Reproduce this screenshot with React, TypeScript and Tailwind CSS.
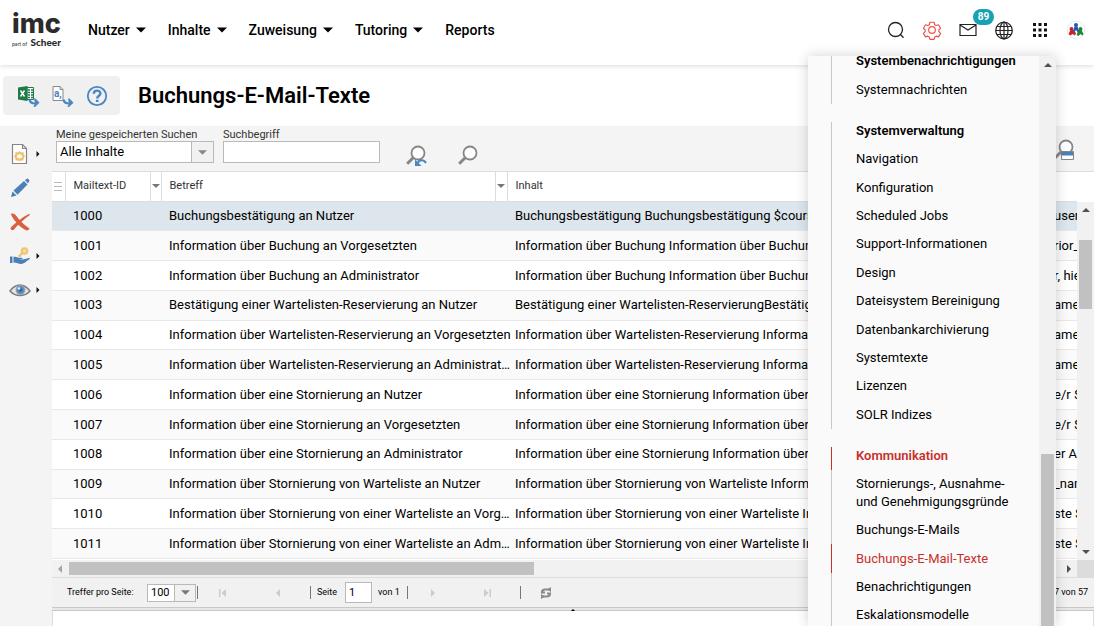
import React from "react";

type Row = { id: number; subject: string; body: string; tail: string };

const rows: Row[] = [
  { id: 1000, subject: "Buchungsbestätigung an Nutzer", body: "Buchungsbestätigung Buchungsbestätigung $course", tail: "user_" },
  { id: 1001, subject: "Information über Buchung an Vorgesetzten", body: "Information über Buchung Information über Buchung", tail: "rior_" },
  { id: 1002, subject: "Information über Buchung an Administrator", body: "Information über Buchung Information über Buchung", tail: "r, hie" },
  { id: 1003, subject: "Bestätigung einer Wartelisten-Reservierung an Nutzer", body: "Bestätigung einer Wartelisten-ReservierungBestätigung", tail: "ame" },
  { id: 1004, subject: "Information über Wartelisten-Reservierung an Vorgesetzten", body: "Information über Wartelisten-Reservierung Information", tail: "ame" },
  { id: 1005, subject: "Information über Wartelisten-Reservierung an Administrator", body: "Information über Wartelisten-Reservierung Information", tail: "ame" },
  { id: 1006, subject: "Information über eine Stornierung an Nutzer", body: "Information über eine Stornierung Information über eine", tail: "e/r $" },
  { id: 1007, subject: "Information über eine Stornierung an Vorgesetzten", body: "Information über eine Stornierung Information über eine", tail: "e/r $" },
  { id: 1008, subject: "Information über eine Stornierung an Administrator", body: "Information über eine Stornierung Information über eine", tail: "er A" },
  { id: 1009, subject: "Information über Stornierung von Warteliste an Nutzer", body: "Information über Stornierung von Warteliste Information", tail: "_nam" },
  { id: 1010, subject: "Information über Stornierung von einer Warteliste an Vorgesetzten", body: "Information über Stornierung von einer Warteliste Information", tail: "ste $" },
  { id: 1011, subject: "Information über Stornierung von einer Warteliste an Administrator", body: "Information über Stornierung von einer Warteliste Information", tail: "ste $" },
];

const adminItems = [
  "Navigation",
  "Konfiguration",
  "Scheduled Jobs",
  "Support-Informationen",
  "Design",
  "Dateisystem Bereinigung",
  "Datenbankarchivierung",
  "Systemtexte",
  "Lizenzen",
  "SOLR Indizes",
];

function Triangle({ dir, className }: { dir: "up" | "down" | "left" | "right"; className: string }) {
  const d = { down: "M0 2h8L4 6z", up: "M0 6h8L4 2z", left: "M6 0v8L2 4z", right: "M2 0v8l4-4z" }[dir];
  return (
    <svg viewBox="0 0 8 8" className={className} fill="currentColor" aria-hidden="true">
      <path d={d} />
    </svg>
  );
}

function Logo() {
  return (
    <a href="#start" aria-label="imc part of Scheer" className="flex w-[49px] shrink-0 flex-col text-[#2b2b2b]">
      <span className="font-[Inter,sans-serif] text-[27px] leading-[26px] font-extrabold">imc</span>
      <span className="flex items-baseline justify-between leading-[10px] whitespace-nowrap">
        <span className="font-[Lato,sans-serif] text-[5px] font-bold text-[#555]">part of</span>
        <span className="font-[Lato,sans-serif] text-[10px] font-black">Scheer</span>
      </span>
    </a>
  );
}

function ArrowBlue() {
  return (
    <>
      <path d="M11.500 14.500c.5 3 2.500 4 5.500 4" fill="none" stroke="#4a86c0" strokeWidth="2.200" />
      <path d="M16 13.500h1.500l4 4.300-4.500 4.200h-1.500l1.500-3.500z" fill="#4a86c0" />
    </>
  );
}

function ExcelIcon() {
  return (
    <svg viewBox="0 0 22 22" className="size-[22px]" aria-hidden="true">
      <path d="M9 2.500h6.500v12H9z" fill="#fff" stroke="#1f7a47" />
      <path d="M10 5h2M13 5h2M10 7.500h2M13 7.500h2M10 10h2M13 10h2M10 12.500h2M13 12.500h2" stroke="#1f7a47" strokeWidth="1.500" />
      <path d="M0 2.500L9.500 1v15L0 14.500z" fill="#1f7a47" />
      <path d="M2.500 5.500l4 6M6.500 5.500l-4 6" stroke="#fff" strokeWidth="1.400" />
      <ArrowBlue />
    </svg>
  );
}

function CsvIcon() {
  return (
    <svg viewBox="0 0 22 22" className="size-[22px]" aria-hidden="true">
      <path d="M1 1.500h7l3 3v11H1z" fill="#fff" stroke="#8a8a8a" />
      <path d="M8 1.500v3h3" fill="none" stroke="#8a8a8a" />
      <text x="2" y="12" fontSize="10" fontWeight="700" fill="#4a86c0" fontFamily="Roboto, sans-serif">a,</text>
      <ArrowBlue />
    </svg>
  );
}

function HelpIcon() {
  return (
    <svg viewBox="0 0 22 22" className="size-[22px]" aria-hidden="true" fill="none" stroke="#4a86c0">
      <circle cx="11" cy="11" r="9.200" strokeWidth="1.800" />
      <path d="M7.800 8.800c0-4.200 6.600-4 6.600-.4 0 2.400-3.200 2.400-3.200 5" strokeWidth="2.400" />
      <path d="M11.200 14.800v2.200" strokeWidth="2.600" />
    </svg>
  );
}

function NewIcon() {
  return (
    <svg viewBox="0 0 20 22" className="h-[22px] w-5" aria-hidden="true">
      <path d="M2.500 1.500h10l4 4v15h-14z" fill="#fff" stroke="#858585" strokeWidth="1.200" />
      <path d="M12.500 1.500v4h4" fill="none" stroke="#858585" strokeWidth="1.200" />
      <path d="M9.500 9.500l1.300 1 1.700-.2.200 1.700 1 1.300-1 1.300-.2 1.700-1.700-.2-1.300 1-1.300-1-1.700.2-.2-1.700-1-1.300 1-1.300.2-1.700 1.700.2z" fill="none" stroke="#f0c070" strokeWidth="2.200" />
    </svg>
  );
}

function PencilIcon() {
  return (
    <svg viewBox="0 0 20 20" className="size-5" aria-hidden="true" fill="#4a7fb8">
      <path d="M1 19l1.500-5.500 4 4z" />
      <path d="M3.500 12.500L14 3l3.500 3.500L7.500 16.700z" />
      <path d="M15 2.200L16.800.7c.8-.6 3.200 1.600 2.500 2.500l-1.300 2z" />
      <path d="M2.800 12.800l4.400 4.400" stroke="#f4f4f4" strokeWidth=".8" />
    </svg>
  );
}

function DeleteIcon() {
  return (
    <svg viewBox="0 0 20 18" className="h-[18px] w-5" aria-hidden="true" fill="#d9603f">
      <path d="M.8 1C3 0 5 1 6.500 3 9 6.500 14 12 19.500 15.500c-.5 1-1.500 2-2.800 2C11 15 4 8.500.8 1z" />
      <path d="M19.500.8c-5 2-13.500 8.500-19 14 0 2 1.500 2.700 3 2.200C7 12.500 13 7 19.800 2z" />
    </svg>
  );
}

function HandKeyIcon() {
  return (
    <svg viewBox="0 0 22 18" className="h-[18px] w-[22px]" aria-hidden="true">
      <circle cx="15.500" cy="4" r="2.800" fill="#f4dcae" stroke="#f0c36f" strokeWidth="2" />
      <path d="M13.500 6l-4 3.500M10.500 8l1.500 1.500" stroke="#f0c36f" strokeWidth="2" />
      <path d="M1 9.500h2.500v6.500H1z" fill="#4a7fb8" />
      <path d="M4.500 9.800c3-.6 4 .9 6 1 2.500 0 3.500.2 3 1.500H10c2.500 1.200 6-.2 10.500-1.500.8.300.2 1.200-.5 1.600-3 2.200-5 4.400-8 4.600-2.500 0-4-1.300-7.500-1.500z" fill="#4a7fb8" />
    </svg>
  );
}

function EyeIcon() {
  return (
    <svg viewBox="0 0 22 14" className="h-[14px] w-[22px]" aria-hidden="true">
      <path d="M1 8C5 2.500 8 2 11 2s6.500 1.500 10 6c-3 3.500-6 4.500-10 4.500S4 11.500 1 8z" fill="#e6e6e6" stroke="#7d7d7d" strokeWidth="1.500" />
      <circle cx="11.500" cy="7" r="4.500" fill="#5b8fc5" stroke="#a5a5a5" />
      <circle cx="11.500" cy="7" r="2" fill="#33689f" />
      <circle cx="10" cy="5.500" r="1.300" fill="#e5eef7" />
    </svg>
  );
}

function Magnifier({ extra }: { extra?: "reset" | "panel" }) {
  return (
    <svg viewBox="0 0 22 22" className="size-[22px]" aria-hidden="true">
      <circle cx="13" cy="8" r="6.500" fill="#fff" stroke="#868686" strokeWidth="1.800" />
      <path d="M8.200 12.800l-6 6" stroke="#868686" strokeWidth="3" />
      {extra === "reset" && (
        <>
          <path d="M12.500 18.500c1.500-4 6-4.500 8.500-.5" fill="none" stroke="#4a86c0" strokeWidth="2" />
          <path d="M10 14.500v6.500h6.500z" fill="#4a86c0" />
        </>
      )}
      {extra === "panel" && (
        <>
          <path d="M8.500 12.500h12v8h-12z" fill="#fff" stroke="#868686" />
          <path d="M9 13h11v3.500H9z" fill="#4a7fb8" />
        </>
      )}
    </svg>
  );
}

function HeaderIcons() {
  return (
    <div className="mr-2 flex items-center gap-4">
      <button aria-label="Suche" className="flex size-5 items-center justify-center">
        <svg viewBox="0 0 20 20" className="size-5" fill="none" stroke="#222" strokeWidth="1.300">
          <circle cx="9.500" cy="9.500" r="7" />
          <path d="M14.500 14.500l3 3.200" />
        </svg>
      </button>
      <button aria-label="Einstellungen" className="flex size-5 items-center justify-center">
        <svg viewBox="0 0 24 24" className="size-5" fill="none" stroke="#f0524a" strokeWidth="1.400" strokeLinejoin="round">
          <circle cx="12" cy="12" r="4" />
          <path d="M9.500 2.700h5l.7 2.900 1.800 1 2.800-.9 2.500 4.200-2.100 2.100v2l2.100 2.100-2.500 4.200-2.800-.9-1.800 1-.7 2.900h-5l-.7-2.900-1.800-1-2.800.9-2.500-4.200L3.800 14v-2L1.700 9.900l2.500-4.200 2.800.9 1.800-1z" />
        </svg>
      </button>
      <button aria-label="Nachrichten" className="relative flex size-5 items-center justify-center">
        <svg viewBox="0 0 20 20" className="size-5" fill="none" stroke="#222" strokeWidth="1.200">
          <path d="M2 4.500h16v11H2zM2 5l8 5 8-5" />
        </svg>
        <span className="absolute -top-[11px] left-[15px] flex h-[16px] w-[21px] items-center justify-center rounded-full bg-[#17a2b3] pb-px text-[10px] font-bold text-white">89</span>
      </button>
      <button aria-label="Sprache" className="flex size-5 items-center justify-center">
        <svg viewBox="0 0 20 20" className="size-5" fill="none" stroke="#222" strokeWidth="1.200">
          <circle cx="10" cy="10.500" r="8.300" />
          <ellipse cx="10" cy="10.500" rx="4" ry="8.300" />
          <path d="M10 2v17M2 10.500h16M3 6.500h14M3 14.500h14" />
        </svg>
      </button>
      <button aria-label="Anwendungen" className="flex size-5 items-center justify-center">
        <svg viewBox="0 0 20 20" className="size-5" fill="#111">
          {[3, 8.5, 14].map((y) => [3, 8.5, 14].map((x) => <rect key={`${x}-${y}`} x={x} y={y} width="3" height="3" />))}
        </svg>
      </button>
      <button aria-label="Profil" className="flex size-5 items-center justify-center">
        <svg viewBox="0 0 20 20" className="size-5">
          <circle cx="10" cy="10" r="9" fill="#fff" stroke="#ececec" />
          <circle cx="5.500" cy="9" r="2" fill="#c22" />
          <path d="M2.500 14l2-4h3l2.500 3-1 2.500-2.500-1.500-2 1.500z" fill="#c22" />
          <circle cx="14.500" cy="9" r="2" fill="#1b8a2f" />
          <path d="M10.500 15l2-5h3l2 4-1 1.500-2-1.500-2 2z" fill="#1b8a2f" />
          <circle cx="10" cy="5" r="2" fill="#2455b8" />
          <path d="M7 12l1.500-5.500h3l2 5.500-1.500.5-2-2.500-2 2.500z" fill="#2455b8" />
        </svg>
      </button>
    </div>
  );
}

function SideButton({ label, more, children }: { label: string; more?: boolean; children: React.ReactNode }) {
  return (
    <button aria-label={label} className="flex h-[34px] w-full items-center gap-1 pl-[9px]">
      <span className="flex w-[22px] justify-center">{children}</span>
      {more && <Triangle dir="right" className="size-[6px] text-[#111]" />}
    </button>
  );
}

function MenuItem({ children, active }: { children: React.ReactNode; active?: boolean }) {
  return (
    <li className={`flex flex-auto items-center border-l py-[5px] pl-6 ${active ? "border-[#c9302c] text-[#c9302c]" : "border-[#c8c8c8]"}`}>
      <a href="#menu" className="leading-[18px]">{children}</a>
    </li>
  );
}

function MenuTitle({ children, active }: { children: React.ReactNode; active?: boolean }) {
  return (
    <li className={`h-[23px] shrink-0 border-l pl-6 leading-[18px] font-semibold ${active ? "border-[#c9302c] text-[#c9302c]" : "border-[#c8c8c8]"}`}>
      {children}
    </li>
  );
}

function SettingsMenu() {
  return (
    <div className="absolute top-14 right-[38px] bottom-0 z-20 flex w-[248px] overflow-hidden bg-[#fafafa] shadow-[0_0_12px_rgba(0,0,0,0.18)]">
      <nav aria-label="Einstellungen" className="flex-1 pl-[23px] text-[13px]">
        <ul className="-mt-1 mb-[18px] flex h-[52px] flex-col">
          <MenuTitle>Systembenachrichtigungen</MenuTitle>
          <MenuItem>Systemnachrichten</MenuItem>
        </ul>
        <ul className="mb-[18px] flex h-[307px] flex-col">
          <MenuTitle>Systemverwaltung</MenuTitle>
          {adminItems.map((t) => <MenuItem key={t}>{t}</MenuItem>)}
        </ul>
        <ul className="flex h-[182px] flex-col">
          <MenuTitle active>Kommunikation</MenuTitle>
          <MenuItem>Stornierungs-, Ausnahme-<br />und Genehmigungsgründe</MenuItem>
          <MenuItem>Buchungs-E-Mails</MenuItem>
          <MenuItem active>Buchungs-E-Mail-Texte</MenuItem>
          <MenuItem>Benachrichtigungen</MenuItem>
          <MenuItem>Eskalationsmodelle</MenuItem>
        </ul>
      </nav>
      <div className="flex w-[17px] flex-col items-center bg-[#f1f1f1] pt-[5px]">
        <Triangle dir="up" className="size-2 text-[#505050]" />
        <div className="mt-[385px] w-[13px] flex-1 bg-[#c1c1c1]" />
      </div>
    </div>
  );
}

function Divider() {
  return <span className="h-[13px] w-px bg-[#777]" />;
}

function Pager() {
  return (
    <div className="flex h-[30px] shrink-0 items-center border-t border-[#dcdcdc] bg-[#f1f1f1] pr-[6px] pl-[15px] text-[9px] text-black">
      <label htmlFor="pageSize" className="w-20">Treffer pro Seite:</label>
      <div className="relative mr-px flex h-[18px] w-[49px] border border-[#b9b9b9] bg-white">
        <select id="pageSize" className="w-full appearance-none pl-[3px] text-[11px] leading-4 outline-none">
          <option>100</option>
        </select>
        <span className="pointer-events-none absolute inset-y-0 right-0 flex w-[21px] items-center justify-center border-l border-[#b9b9b9] bg-[#f1f1f1]">
          <Triangle dir="down" className="size-[9px] text-[#777]" />
        </span>
      </div>
      <Divider />
      <button aria-label="Erste Seite" className="ml-5 w-3 text-[#ccc]">
        <svg viewBox="0 0 10 8" className="h-2 w-[10px]" fill="currentColor"><path d="M1 0h1.500v8H1zM8 0v8L3.500 4z" /></svg>
      </button>
      <button aria-label="Vorherige Seite" className="ml-11 w-2 text-[#ccc]"><Triangle dir="left" className="size-2" /></button>
      <span className="w-7" />
      <Divider />
      <label htmlFor="page" className="mr-2 ml-[6px]">Seite</label>
      <input id="page" defaultValue="1" className="mr-[6px] h-[21px] w-[27px] border border-[#b9b9b9] bg-white pl-[3px] text-[11px] outline-none" />
      <span className="mr-[7px]">von 1</span>
      <Divider />
      <button aria-label="Nächste Seite" className="ml-[21px] w-2 text-[#ccc]"><Triangle dir="right" className="size-2" /></button>
      <button aria-label="Letzte Seite" className="ml-[46px] w-3 text-[#ccc]">
        <svg viewBox="0 0 10 8" className="h-2 w-[10px]" fill="currentColor"><path d="M1 0v8l4.500-4zM6.500 0H8v8H6.500z" /></svg>
      </button>
      <span className="w-[25px]" />
      <Divider />
      <button aria-label="Aktualisieren" className="ml-[19px]">
        <svg viewBox="0 0 12 12" className="size-3" fill="none" stroke="#8a8a8a" strokeWidth="2.200">
          <path d="M10.500 2.500H5C3 2.500 2 3.500 2 5.500h3" />
          <path d="M1.500 9.500H7c2 0 3-1 3-3H7" />
          <path d="M11 0v5L7 2.500zM1 12V7l4 2.500z" fill="#8a8a8a" stroke="none" />
        </svg>
      </button>
      <span className="ml-auto">1 - 57 von 57</span>
    </div>
  );
}

function MailTable() {
  const th = "border-r border-[#dcdcdc] p-0 text-left text-[11px] font-normal text-[#333]";
  return (
    <table className="h-[387px] w-full table-fixed border-collapse text-[13px] text-black">
      <colgroup>
        <col className="w-[13px]" />
        <col className="w-[85px]" />
        <col className="w-[11px]" />
        <col className="w-[334px]" />
        <col className="w-[12px]" />
        <col />
      </colgroup>
      <thead>
        <tr className="h-[29px] border-b border-[#dcdcdc] bg-white">
          <th className={th}>
            <span className="mx-auto flex w-2 flex-col gap-[3px]">
              <span className="h-px bg-[#bbb]" /><span className="h-px bg-[#bbb]" /><span className="h-px bg-[#bbb]" />
            </span>
          </th>
          <th className={th}><span className="pl-2">Mailtext-ID</span></th>
          <th className={th}><Triangle dir="down" className="mx-auto size-2 text-[#777]" /></th>
          <th className={th}><span className="pl-2">Betreff</span></th>
          <th className={th}><Triangle dir="down" className="mx-auto size-2 text-[#777]" /></th>
          <th className="p-0 pl-2 text-left text-[11px] font-normal text-[#333]">Inhalt</th>
        </tr>
      </thead>
      <tbody>
        {rows.map((r, i) => (
          <tr key={r.id} className={`border-b border-[#e8e8e8] ${i === 0 ? "bg-[#dde6ec]" : i % 2 ? "bg-[#fafafa]" : "bg-white"}`}>
            <td className="p-0" />
            <td className="p-0 pl-2">{r.id}</td>
            <td colSpan={3} className="p-0 pl-[19px]">
              <div className="-mr-1 truncate">{r.subject}</div>
            </td>
            <td className="p-0 pl-2">
              <div className="flex overflow-hidden whitespace-nowrap">
                <span className="w-0 flex-1 overflow-hidden">{r.body}</span>
                <span className="w-[23px] shrink-0 overflow-hidden">{r.tail}</span>
              </div>
            </td>
          </tr>
        ))}
      </tbody>
    </table>
  );
}

export default function App() {
  return (
    <div className="relative flex h-screen flex-col overflow-hidden bg-white font-[Roboto,sans-serif] text-black">
      <header className="z-10 flex h-[65px] shrink-0 items-center bg-white pb-[5px] pl-3 shadow-[0_1px_5px_rgba(0,0,0,0.15)]">
        <Logo />
        <nav aria-label="Hauptmenü" className="ml-[27px] flex flex-1 gap-[22px] text-[14px] font-medium">
          {["Nutzer", "Inhalte", "Zuweisung", "Tutoring"].map((t) => (
            <button key={t} className="flex items-center gap-[6px]">
              {t}
              <Triangle dir="down" className="size-[10px]" />
            </button>
          ))}
          <a href="#reports">Reports</a>
        </nav>
        <HeaderIcons />
      </header>

      <div className="flex h-[61px] shrink-0 items-center pl-[3px]">
        <div className="flex h-[39px] w-[117px] items-center gap-3 rounded bg-[#f0f0f0] pl-[15px]">
          <button aria-label="Excel-Export"><ExcelIcon /></button>
          <button aria-label="CSV-Export"><CsvIcon /></button>
          <button aria-label="Hilfe"><HelpIcon /></button>
        </div>
        <h1 className="ml-[18px] text-[22px] font-semibold">Buchungs-E-Mail-Texte</h1>
      </div>

      <main className="flex min-h-0 flex-1">
        <aside className="w-[52px] shrink-0 bg-[#f4f4f4] pt-[11px]">
          <SideButton label="Neu" more><NewIcon /></SideButton>
          <SideButton label="Bearbeiten"><PencilIcon /></SideButton>
          <SideButton label="Löschen"><DeleteIcon /></SideButton>
          <SideButton label="Rechte" more><HandKeyIcon /></SideButton>
          <SideButton label="Ansicht" more><EyeIcon /></SideButton>
        </aside>

        <section className="flex min-w-0 flex-1 flex-col">
          <div className="flex h-[46px] shrink-0 border-b border-[#dcdcdc] bg-[#f4f4f4] pr-[19px] pl-1 text-[11px] text-[#333]">
            <div className="w-[158px]">
              <label htmlFor="saved" className="block h-[15px] leading-[17px]">Meine gespeicherten Suchen</label>
              <div className="relative flex h-[22px] border border-[#b9b9b9] bg-white">
                <select id="saved" className="w-full appearance-none pl-[3px] text-[13px] text-black outline-none">
                  <option>Alle Inhalte</option>
                </select>
                <span className="pointer-events-none absolute inset-y-0 right-0 flex w-[22px] items-center justify-center border-l border-[#b9b9b9] bg-[#f1f1f1]">
                  <Triangle dir="down" className="size-[9px] text-[#888]" />
                </span>
              </div>
            </div>
            <div className="ml-[9px] w-[157px]">
              <label htmlFor="term" className="block h-[15px] leading-[17px]">Suchbegriff</label>
              <input id="term" className="h-[22px] w-full border border-[#b9b9b9] bg-white px-1 text-[13px] outline-none" />
            </div>
            <div className="ml-[25px] flex flex-1 items-center gap-[30px] pt-[14px]">
              <button aria-label="Suche zurücksetzen"><Magnifier extra="reset" /></button>
              <button aria-label="Suchen"><Magnifier /></button>
              <button aria-label="Erweiterte Suche" className="-mt-3 ml-auto"><Magnifier extra="panel" /></button>
            </div>
          </div>

          <div className="flex shrink-0">
            <div className="min-w-0 flex-1 pb-px"><MailTable /></div>
            <div className="flex w-[17px] flex-col items-center bg-[#f1f1f1]">
              <div className="h-[30px] w-full bg-white" />
              <Triangle dir="up" className="mt-1 size-2 text-[#505050]" />
              <div className="mt-[26px] h-[69px] w-[13px] bg-[#c1c1c1]" />
              <Triangle dir="down" className="mt-auto mb-1 size-2 text-[#505050]" />
            </div>
          </div>

          <div className="flex h-[17px] shrink-0 bg-[#f1f1f1]">
            <div className="flex flex-1 items-center px-1">
              <Triangle dir="left" className="size-2 text-[#a3a3a3]" />
              <div className="ml-[5px] h-[13px] w-[465px] bg-[#c1c1c1]" />
              <Triangle dir="right" className="ml-auto size-2 text-[#505050]" />
            </div>
            <div className="w-[17px] bg-[#dcdcdc]" />
          </div>

          <Pager />
          <div className="flex h-1 shrink-0 justify-center border-y border-[#c8c8c8] bg-[#e8e8e8]">
            <Triangle dir="up" className="size-1 text-black" />
          </div>
          <div className="flex-1 border-x border-[#dcdcdc] bg-white" />
        </section>
      </main>

      <SettingsMenu />
    </div>
  );
}
